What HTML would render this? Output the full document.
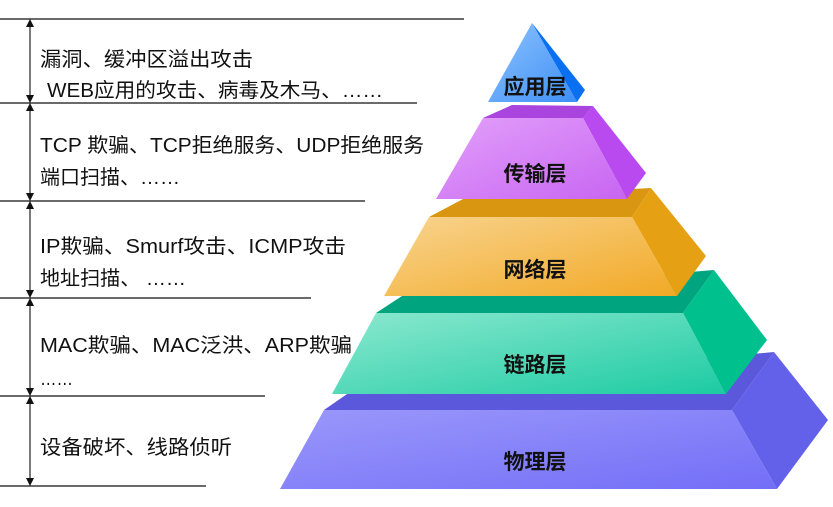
<!DOCTYPE html>
<html><head><meta charset="utf-8"><style>
html,body{margin:0;padding:0;background:#fff;width:833px;height:507px;overflow:hidden}
svg{display:block}
.t{font-family:"Liberation Sans","Noto Sans CJK SC",sans-serif;font-size:20px;fill:#111}
.l{font-family:"Liberation Sans","Noto Sans CJK SC",sans-serif;font-size:21px;font-weight:bold;fill:#111;text-anchor:middle}
</style></head><body>
<svg width="833" height="507" viewBox="0 0 833 507" xmlns="http://www.w3.org/2000/svg">
<defs>
<linearGradient id="gb" x1="0" y1="0" x2="1" y2="1"><stop offset="0" stop-color="#8fc3ff"/><stop offset="1" stop-color="#3d8ff5"/></linearGradient>
<linearGradient id="gp" x1="0" y1="0" x2="1" y2="1"><stop offset="0" stop-color="#e2a0fa"/><stop offset="1" stop-color="#c865f2"/></linearGradient>
<linearGradient id="go" x1="0" y1="0" x2="1" y2="1"><stop offset="0" stop-color="#f8d490"/><stop offset="1" stop-color="#f2a925"/></linearGradient>
<linearGradient id="gg" x1="0" y1="0" x2="1" y2="1"><stop offset="0" stop-color="#8ce8cf"/><stop offset="1" stop-color="#1ccba3"/></linearGradient>
<linearGradient id="gv" x1="0" y1="0" x2="1" y2="1"><stop offset="0" stop-color="#9a98fb"/><stop offset="1" stop-color="#736ef7"/></linearGradient>
<marker id="ar" markerWidth="8" markerHeight="8" refX="4" refY="4" orient="auto-start-reverse" markerUnits="userSpaceOnUse"><path d="M0,0 L8,4 L0,8 z" fill="#111"/></marker>
</defs>
<g stroke="#111" stroke-width="1.3">
<line x1="0" y1="19" x2="464" y2="19"/>
<line x1="0" y1="103" x2="417" y2="103"/>
<line x1="0" y1="201" x2="365" y2="201"/>
<line x1="0" y1="298" x2="311" y2="298"/>
<line x1="0" y1="396" x2="265" y2="396"/>
<line x1="0" y1="486" x2="206" y2="486"/>
</g>
<g stroke="#333" stroke-width="1.3" marker-start="url(#ar)" marker-end="url(#ar)">
<line x1="30" y1="23" x2="30" y2="99"/>
<line x1="30" y1="107" x2="30" y2="197"/>
<line x1="30" y1="205" x2="30" y2="294"/>
<line x1="30" y1="302" x2="30" y2="392"/>
<line x1="30" y1="400" x2="30" y2="482"/>
</g>
<text class="t" x="40" y="66" textLength="213" lengthAdjust="spacingAndGlyphs">漏洞、缓冲区溢出攻击</text>
<text class="t" x="47" y="97" textLength="336" lengthAdjust="spacingAndGlyphs">WEB应用的攻击、病毒及木马、……</text>
<text class="t" x="40" y="152" textLength="384" lengthAdjust="spacingAndGlyphs">TCP 欺骗、TCP拒绝服务、UDP拒绝服务</text>
<text class="t" x="40" y="184" textLength="140" lengthAdjust="spacingAndGlyphs">端口扫描、……</text>
<text class="t" x="40" y="253" textLength="306" lengthAdjust="spacingAndGlyphs">IP欺骗、Smurf攻击、ICMP攻击</text>
<text class="t" x="40" y="285" textLength="146" lengthAdjust="spacingAndGlyphs">地址扫描、 ……</text>
<text class="t" x="40" y="352" textLength="312" lengthAdjust="spacingAndGlyphs">MAC欺骗、MAC泛洪、ARP欺骗</text>
<text class="t" x="40" y="385" textLength="33" lengthAdjust="spacingAndGlyphs">……</text>
<text class="t" x="40" y="454" textLength="192" lengthAdjust="spacingAndGlyphs">设备破坏、线路侦听</text>

<!-- physical -->
<polygon points="324,410 350,392 774,352 732,410" fill="#5c58dc"/>
<polygon points="732,410 774,352 828,420 777,489" fill="#6360ea"/>
<polygon points="324,410 732,410 777,489 280,489" fill="url(#gv)"/>
<!-- link -->
<polygon points="376,313 402,296 714,270 683,313" fill="#00a57f"/>
<polygon points="683,313 714,270 767,340 726,394" fill="#00c08e"/>
<polygon points="376,313 683,313 726,394 332,394" fill="url(#gg)"/>
<!-- network -->
<polygon points="429,217 465,198 651,188 632,217" fill="#d99611"/>
<polygon points="632,217 651,188 706,256 677,296" fill="#e6a014"/>
<polygon points="429,217 632,217 677,296 384,296" fill="url(#go)"/>
<!-- transport -->
<polygon points="483,118 512,105 593,106 583,118" fill="#a944de"/>
<polygon points="583,118 593,106 646,173 627,199" fill="#b84af0"/>
<polygon points="483,118 583,118 627,199 436,199" fill="url(#gp)"/>
<!-- app -->
<polygon points="532,23 585,90 577,102" fill="#0a6ff0"/>
<polygon points="532,23 577,102 488,102" fill="url(#gb)"/>

<text class="l" x="535" y="94">应用层</text>
<text class="l" x="535" y="181">传输层</text>
<text class="l" x="535" y="277">网络层</text>
<text class="l" x="535" y="372">链路层</text>
<text class="l" x="535" y="469">物理层</text>
</svg>
</body></html>
